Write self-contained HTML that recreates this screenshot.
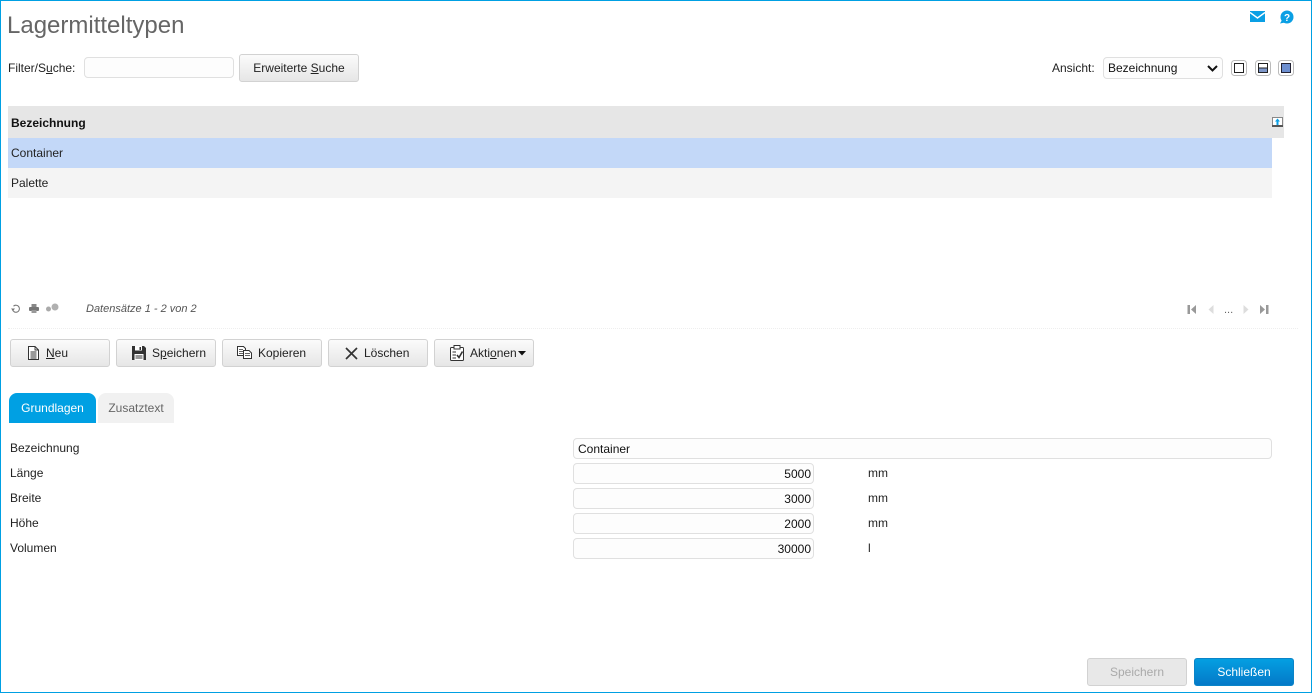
<!DOCTYPE html>
<html><head><meta charset="utf-8"><style>
html,body{margin:0;padding:0;background:#fff}
body{width:1312px;height:693px;position:relative;overflow:hidden;font:12px "Liberation Sans",sans-serif;color:#222}
.a{position:absolute;white-space:nowrap}
.t{position:absolute;white-space:nowrap;line-height:14px}
.btn{position:absolute;box-sizing:border-box;height:28px;border:1px solid #d2d2d2;border-radius:3px;background:linear-gradient(#fbfbfb,#e6e6e6);line-height:26px;color:#222;white-space:nowrap}
.inp{position:absolute;box-sizing:border-box;height:21px;left:573px;width:241px;border:1px solid #e0e0e0;border-radius:4px;background:#fdfdfd;line-height:20px;text-align:right;padding-right:2px;color:#111}
u{text-decoration:underline}
svg{position:absolute;display:block}
</style></head><body>
<div class="a" style="left:0;top:0;width:1310px;height:691px;border:1px solid #00a0e3"></div>
<div class="a" style="left:7px;top:12px;font-size:24px;line-height:28px;color:#666">Lagermitteltypen</div>

<svg style="left:1250px;top:11px" width="15" height="11" viewBox="0 0 15 11"><rect width="15" height="11" fill="#0a9fe4"/><path d="M0 1.500L7.500 7 15 1.500" fill="none" stroke="#fff" stroke-width="1.400"/></svg>
<svg style="left:1279px;top:10px" width="15" height="14" viewBox="0 0 15 14"><circle cx="8" cy="7" r="6.500" fill="#0a9fe4"/><path d="M3 10L1 13.500 6 12.500Z" fill="#0a9fe4"/><text x="8" y="11" font-family="Liberation Sans" font-size="10" font-weight="bold" text-anchor="middle" fill="#fff">?</text></svg>

<div class="t" style="left:8px;top:61px">Filter/S<u>u</u>che:</div>
<div class="a" style="left:84px;top:57px;width:150px;height:21px;box-sizing:border-box;border:1px solid #e0e0e0;border-radius:4px;background:#fdfdfd"></div>
<div class="btn" style="left:239px;top:54px;width:120px;text-align:center">Erweiterte <u>S</u>uche</div>

<div class="t" style="left:1052px;top:61px">Ansicht:</div>
<div class="a" style="left:1103px;top:57px;width:120px;height:22px;box-sizing:border-box;border:1px solid #e0e0e0;border-radius:4px;background:#fdfdfd;line-height:20px;padding-left:4px;color:#111">Bezeichnung</div>
<svg style="left:1207px;top:65px" width="11" height="7" viewBox="0 0 11 7"><path d="M1 1L5.500 5.500 10 1" fill="none" stroke="#111" stroke-width="2"/></svg>
<svg style="left:1231px;top:60px" width="16" height="16" viewBox="0 0 16 16"><rect x=".5" y=".5" width="15" height="15" rx="3" fill="#fff" stroke="#bbb"/><rect x="3.500" y="3.500" width="9" height="9" fill="#fff" stroke="#222"/></svg>
<svg style="left:1255px;top:60px" width="16" height="16" viewBox="0 0 16 16"><rect x=".5" y=".5" width="15" height="15" rx="3" fill="#fff" stroke="#bbb"/><rect x="3.500" y="8" width="9" height="4.500" fill="#7d96c8"/><rect x="3.500" y="3.500" width="9" height="9" fill="none" stroke="#222"/><path d="M3.500 8H12.500" stroke="#222"/></svg>
<svg style="left:1278px;top:60px" width="16" height="16" viewBox="0 0 16 16"><rect x=".5" y=".5" width="15" height="15" rx="3" fill="#fff" stroke="#bbb"/><rect x="3.500" y="3.500" width="9" height="9" fill="#6d8fd0" stroke="#223"/></svg>

<div class="a" style="left:8px;top:106px;width:1276px;height:32px;background:#e6e6e6"></div>
<div class="t" style="left:11px;top:116px;font-weight:bold;color:#111">Bezeichnung</div>
<svg style="left:1272px;top:117px" width="11" height="10" viewBox="0 0 11 10"><rect x=".5" y=".5" width="10" height="9" fill="#fff" stroke="#888"/><rect x="0" y="8" width="11" height="2" fill="#555"/><path d="M5.500 2.500V8" stroke="#0a9fe4" stroke-width="2"/><path d="M3 4.500L5.500 1.500 8 4.500Z" fill="#0a9fe4"/></svg>
<div class="a" style="left:8px;top:138px;width:1264px;height:30px;background:#c3d8f8"></div>
<div class="t" style="left:11px;top:146px">Container</div>
<div class="a" style="left:8px;top:168px;width:1264px;height:30px;background:#f4f4f4"></div>
<div class="t" style="left:11px;top:176px">Palette</div>

<svg style="left:11px;top:304px" width="10" height="10" viewBox="0 0 10 10"><path d="M2.500 2.200A3.500 3.500 0 1 1 1.500 5.500" fill="none" stroke="#777" stroke-width="1.100"/><path d="M0 4.500H4L2 7Z" fill="#777"/></svg>
<svg style="left:29px;top:304px" width="10" height="9" viewBox="0 0 10 9"><rect x="2.500" y="0" width="5" height="3" fill="#888"/><rect x="0" y="3" width="10" height="4" rx="1" fill="#777"/><rect x="2.500" y="6" width="5" height="3" fill="#999"/></svg>
<svg style="left:45px;top:303px" width="15" height="10" viewBox="0 0 15 10"><circle cx="3.500" cy="6" r="2.500" fill="#aaa"/><circle cx="10" cy="4" r="3.500" fill="#b0b0b0"/></svg>
<div class="t" style="left:86px;top:302px;font-size:11px;font-style:italic;color:#555">Datensätze 1 - 2 von 2</div>

<svg style="left:1187px;top:305px" width="10" height="9" viewBox="0 0 10 9"><rect x="0.500" y="0" width="2.500" height="9" fill="#999"/><path d="M9 0V9L4 4.500Z" fill="#999"/></svg>
<svg style="left:1208px;top:305px" width="6" height="9" viewBox="0 0 6 9"><path d="M5.500 0V9L.5 4.500Z" fill="#ddd"/></svg>
<div class="t" style="left:1224px;top:303px;font-size:11px;color:#666">...</div>
<svg style="left:1243px;top:305px" width="6" height="9" viewBox="0 0 6 9"><path d="M.5 0V9L5.500 4.500Z" fill="#ddd"/></svg>
<svg style="left:1259px;top:305px" width="10" height="9" viewBox="0 0 10 9"><path d="M1 0V9L6 4.500Z" fill="#999"/><rect x="7" y="0" width="2.500" height="9" fill="#999"/></svg>

<div class="a" style="left:8px;top:328px;width:1290px;height:0;border-top:1px dotted #eee"></div>

<div class="btn" style="left:10px;top:339px;width:100px"><span class="t" style="left:35px;top:6px"><u>N</u>eu</span></div>
<svg style="left:28px;top:346px" width="11" height="14" viewBox="0 0 11 14"><path d="M.5 .5H7L10.500 4V13.500H.5Z" fill="#fff" stroke="#333"/><path d="M7 .5V4H10.500M2.500 6H8.500M2.500 8H8.500M2.500 10H8.500M2.500 12H8.500" fill="none" stroke="#333" stroke-width=".9"/></svg>

<div class="btn" style="left:116px;top:339px;width:100px"><span class="t" style="left:35px;top:6px">S<u>p</u>eichern</span></div>
<svg style="left:132px;top:346px" width="14" height="14" viewBox="0 0 14 14"><path d="M0 0H12L14 2V14H0Z" fill="#333"/><rect x="3" y="0" width="7" height="4.500" fill="#fff"/><rect x="7.500" y="1" width="1.500" height="3" fill="#333"/><rect x="2.500" y="8" width="9" height="6" fill="#fff"/><path d="M3.500 10H10.500M3.500 12H10.500" stroke="#333"/></svg>

<div class="btn" style="left:222px;top:339px;width:100px"><span class="t" style="left:35px;top:6px">Kopieren</span></div>
<svg style="left:237px;top:346px" width="15" height="13" viewBox="0 0 15 13"><path d="M.5 .5H6.500L8.500 2.500V9.500H.5Z" fill="#fff" stroke="#333"/><path d="M2 3.500H6M2 5.500H6M2 7.500H6" stroke="#333" stroke-width=".8"/><path d="M6.500 4.500H12L14.500 7V12.500H6.500Z" fill="#fff" stroke="#333"/><path d="M8 7.500H13M8 9.500H13" stroke="#333" stroke-width=".8"/></svg>

<div class="btn" style="left:328px;top:339px;width:100px"><span class="t" style="left:35px;top:6px">Löschen</span></div>
<svg style="left:345px;top:347px" width="13" height="13" viewBox="0 0 13 13"><path d="M1 1L12 12M12 1L1 12" stroke="#333" stroke-width="1.700"/></svg>

<div class="btn" style="left:434px;top:339px;width:100px"><span class="t" style="left:35px;top:6px">Akti<u>o</u>nen</span></div>
<svg style="left:518px;top:351px" width="8" height="5" viewBox="0 0 8 5"><path d="M0 0H8L4 4.500Z" fill="#111"/></svg>
<svg style="left:450px;top:345px" width="14" height="16" viewBox="0 0 14 16"><rect x=".5" y="2.500" width="13" height="13" rx="1" fill="#fff" stroke="#333"/><rect x="4" y="0.500" width="6" height="3.500" fill="#fff" stroke="#333"/><path d="M2.500 7H6M2.500 10H6M2.500 13H6" stroke="#333"/><path d="M7 10L9 12.500 12.500 6.500" fill="none" stroke="#333" stroke-width="1.600"/></svg>

<div class="a" style="left:9px;top:393px;width:87px;height:30px;background:#00a0e3;border-radius:8px 8px 0 0;color:#fff;text-align:center;line-height:30px">Grundlagen</div>
<div class="a" style="left:98px;top:393px;width:76px;height:30px;background:#f1f1f1;border-radius:8px 8px 0 0;color:#666;text-align:center;line-height:30px">Zusatztext</div>

<div class="t" style="left:10px;top:441px">Bezeichnung</div>
<div class="t" style="left:10px;top:466px">Länge</div>
<div class="t" style="left:10px;top:491px">Breite</div>
<div class="t" style="left:10px;top:516px">Höhe</div>
<div class="t" style="left:10px;top:541px">Volumen</div>

<div class="inp" style="top:438px;width:699px;text-align:left;padding-left:4px">Container</div>
<div class="inp" style="top:463px">5000</div>
<div class="inp" style="top:488px">3000</div>
<div class="inp" style="top:513px">2000</div>
<div class="inp" style="top:538px">30000</div>
<div class="t" style="left:868px;top:466px">mm</div>
<div class="t" style="left:868px;top:491px">mm</div>
<div class="t" style="left:868px;top:516px">mm</div>
<div class="t" style="left:868px;top:541px">l</div>

<div class="btn" style="left:1087px;top:658px;width:100px;text-align:center;color:#aaa;background:#e8e8e8">Speichern</div>
<div class="btn" style="left:1194px;top:658px;width:100px;text-align:center;color:#fff;border:1px solid #0a84c8;background:linear-gradient(#049fe2,#0479c8)">Schließen</div>
</body></html>
